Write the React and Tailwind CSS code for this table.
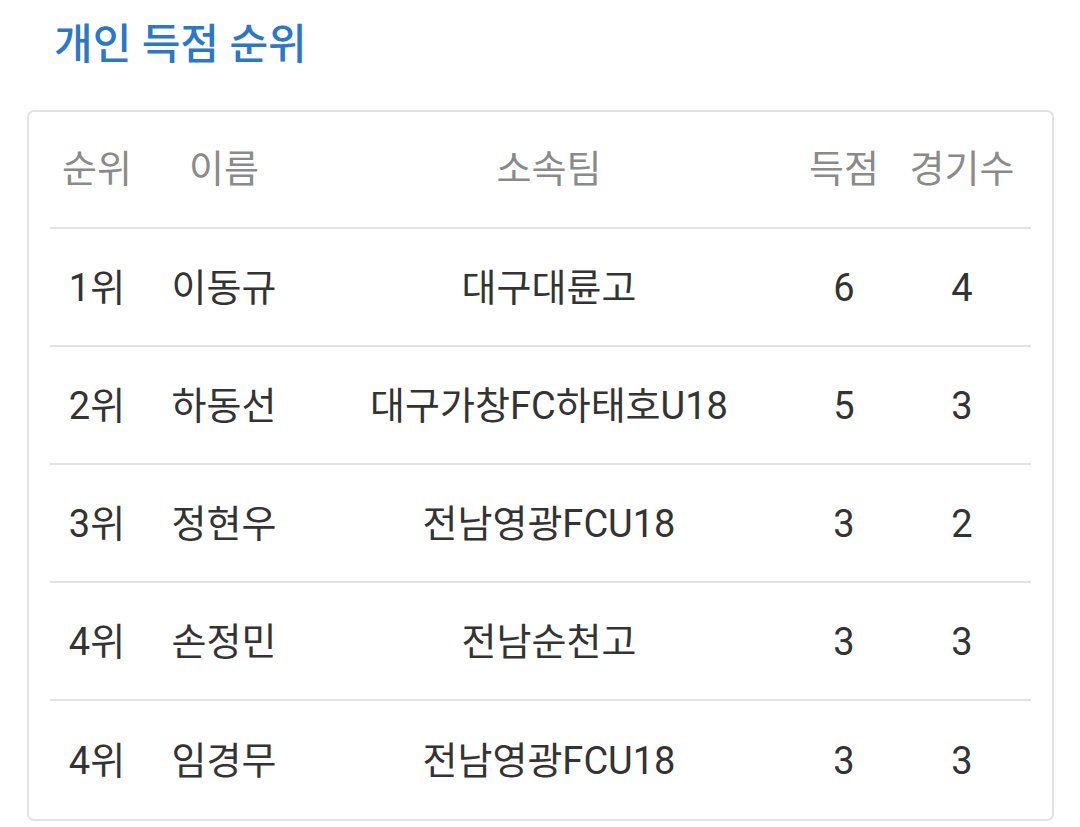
import React from 'react';

const rows = [
  { rank: '1위', name: '이동규', team: '대구대륜고', goals: 6, games: 4 },
  { rank: '2위', name: '하동선', team: '대구가창FC하태호U18', goals: 5, games: 3 },
  { rank: '3위', name: '정현우', team: '전남영광FCU18', goals: 3, games: 2 },
  { rank: '4위', name: '손정민', team: '전남순천고', goals: 3, games: 3 },
  { rank: '4위', name: '임경무', team: '전남영광FCU18', goals: 3, games: 3 },
];

const cols = 'grid grid-cols-[94px_160px_490px_100px_136px] items-center text-center';

export default function App() {
  return (
    <div
      className="min-h-[827px] bg-white pl-[27px] pr-[26px]"
      style={{ fontFamily: "Roboto, 'Noto Sans CJK KR', sans-serif" }}
    >
      {/* Title */}
      <h2 className="pl-[27px] pt-[19px] h-[110px] text-[42px] leading-[52px] font-medium text-[#2b77c9]">
        개인 득점 순위
      </h2>

      {/* Ranking table */}
      <div className="rounded-[7px] border-2 border-[#e2e2e2] px-[21px]">
        <div className={`${cols} h-[117px] border-b-2 border-[#e2e2e2] text-[38px] text-[#8a8a8a]`}>
          <div>순위</div>
          <div>이름</div>
          <div>소속팀</div>
          <div>득점</div>
          <div>경기수</div>
        </div>
        {rows.map((row, i) => (
          <div
            key={i}
            className={`${cols} h-[118px] pt-[3px] text-[38px] text-[#333333] ${i < rows.length - 1 ? 'border-b-2 border-[#e2e2e2]' : ''}`}
          >
            <div>{row.rank}</div>
            <div>{row.name}</div>
            <div>{row.team}</div>
            <div>{row.goals}</div>
            <div>{row.games}</div>
          </div>
        ))}
      </div>
    </div>
  );
}
